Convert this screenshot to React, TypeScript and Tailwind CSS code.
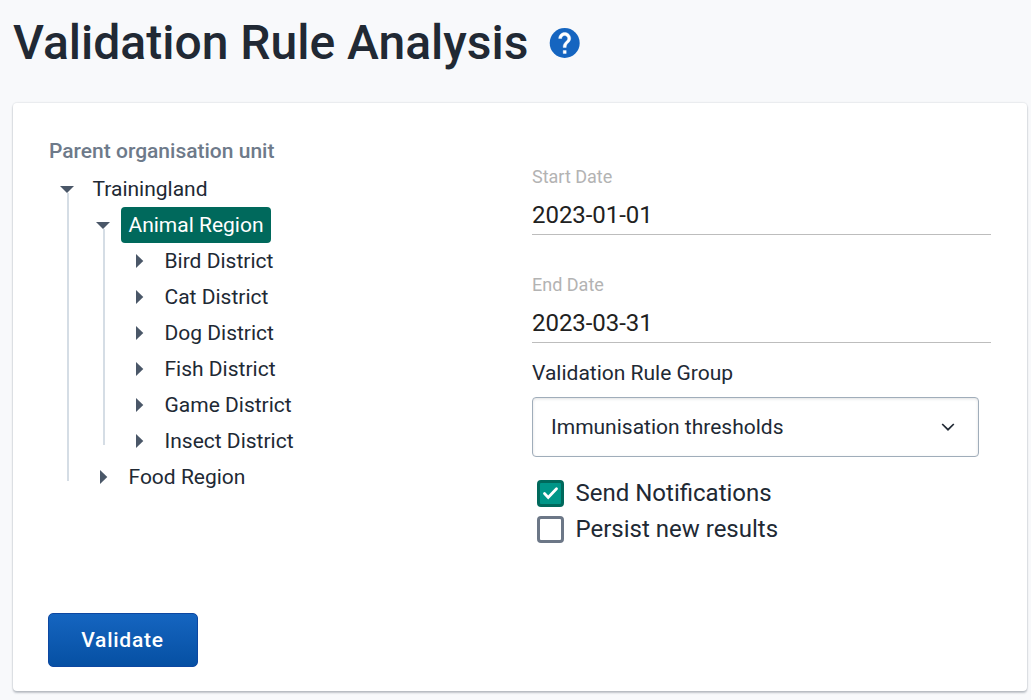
const districts = ["Bird District", "Cat District", "Dog District", "Fish District", "Game District", "Insect District"];

function HelpIcon() {
  return (
    <svg className="mt-[25px] ml-[19px] block size-9 shrink-0" viewBox="0.2 0 24 24">
      <circle cx="12" cy="12" r="10" fill="#1565c0" />
      <path
        d="M11 17h2v2h-2zM15.07 11.25l-.9.92C13.45 12.9 13 13.5 13 15h-2v-.5c0-1.1.45-2.1 1.17-2.83l1.24-1.26c.37-.36.59-.86.59-1.41 0-1.1-.9-2-2-2s-2 .9-2 2H8c0-2.21 1.79-4 4-4s4 1.79 4 4c0 .88-.36 1.68-.93 2.25z"
        fill="#fff"
        stroke="#fff"
        strokeWidth="0.25"
      />
    </svg>
  );
}

function DownArrow() {
  return (
    <svg className="block h-2 w-3.5 shrink-0" viewBox="0 0 14 8">
      <path d="M0 1H14L7 8Z" fill="#4a5768" />
    </svg>
  );
}

function RightArrow() {
  return (
    <svg className="block h-3.5 w-2 shrink-0" viewBox="0 0 8 14">
      <path d="M0 0L7.3 7L0 14Z" fill="#4a5768" />
    </svg>
  );
}

function ClosedNode({ label }: { label: string }) {
  return (
    <div className="flex h-9 items-center">
      <RightArrow />
      <span className="ml-[20.5px] pt-px">{label}</span>
    </div>
  );
}

function DateField({ label, value }: { label: string; value: string }) {
  return (
    <label className="flex h-[72px] w-[459px] flex-col border-b border-[#bdbdbd]">
      <span className="mt-0.5 text-[18px] leading-6 text-[#b3b3b3]">{label}</span>
      <span className="mt-3 text-[24px] leading-7 tracking-[-0.05px] text-[#212121]">{value}</span>
    </label>
  );
}

function CheckRow({ label, checked }: { label: string; checked: boolean }) {
  return (
    <label className="flex h-9 items-center text-[24px]">
      <span
        className={
          checked
            ? "flex size-[27px] items-center justify-center rounded-[4px] border-3 border-[#00695c] bg-[#009688]"
            : "flex size-[27px] rounded-[4px] border-3 border-[#6c7787] bg-white"
        }
      >
        {checked && (
          <svg className="size-[17px]" viewBox="0 0 17 17" fill="none">
            <path d="M2.5 8.6L6.2 12.4L14.5 3.8" stroke="#fff" strokeWidth="2.8" strokeLinecap="round" />
          </svg>
        )}
      </span>
      <span className="ml-[11.5px]">{label}</span>
    </label>
  );
}

export default function App() {
  return (
    <div className="h-[700px] w-[1031px] overflow-hidden bg-[#f8f9fb] pl-[13px] font-['Roboto',sans-serif] text-[#212934]">
      <header className="flex h-[103px] items-start">
        <h1 className="mt-[15px] text-[48px] leading-[56px] font-medium whitespace-nowrap">Validation Rule Analysis</h1>
        <HelpIcon />
      </header>
      <main className="flex h-[588px] w-[1014px] flex-col rounded-[4px] bg-white px-[35px] shadow-[0_2px_2px_rgba(64,75,90,0.3),0_0_1px_1px_rgba(64,75,90,0.08)]">
        <div className="flex h-[510px]">
          <section className="w-[484px] pt-[33px] text-[21px]">
            <h2 className="ml-px leading-[30px] font-medium text-[#6e7a8a]">Parent organisation unit</h2>
            <ul className="mt-[5px] ml-3">
              <li>
                <div className="flex h-9 items-center">
                  <DownArrow />
                  <span className="ml-[18.5px] pt-px">Trainingland</span>
                </div>
                <div className="-mt-3.5 ml-[7px] h-[288px] border-l-2 border-[#d5dde5] pt-3.5">
                  <ul className="ml-[27px]">
                    <li>
                      <div className="flex h-9 items-center">
                        <DownArrow />
                        <span className="ml-[11px] flex h-9 w-[150px] items-center justify-center rounded-[4px] bg-[#00695c] pt-0.5 whitespace-nowrap text-white">
                          Animal Region
                        </span>
                      </div>
                      <div className="-mt-3.5 ml-[7px] h-[216px] border-l-2 border-[#d5dde5] pt-3.5">
                        <ul className="ml-[31px]">
                          {districts.map((name) => (
                            <li key={name}>
                              <ClosedNode label={name} />
                            </li>
                          ))}
                        </ul>
                      </div>
                    </li>
                    <li className="mt-3.5 ml-1">
                      <ClosedNode label="Food Region" />
                    </li>
                  </ul>
                </div>
              </li>
            </ul>
          </section>
          <section className="pt-[60px]">
            <div className="flex flex-col gap-9">
              <DateField label="Start Date" value="2023-01-01" />
              <DateField label="End Date" value="2023-03-31" />
            </div>
            <div className="mt-[15px] text-[21px] leading-[30px]">Validation Rule Group</div>
            <div className="mt-[9px] flex h-[60px] w-[447px] items-center justify-between rounded-[4px] border border-[#a0adba] bg-white pr-[22px] pl-[18px] text-[21px] shadow-[inset_0_1px_3px_rgba(48,54,60,0.15)]">
              <span className="pt-0.5">Immunisation thresholds</span>
              <svg className="h-2 w-4" viewBox="0 0 16 8" fill="none">
                <path d="M2.2 1L8 6.7L13.8 1" stroke="#212934" strokeWidth="1.7" />
              </svg>
            </div>
            <div className="mt-[18px] ml-[5px]">
              <CheckRow label="Send Notifications" checked />
              <CheckRow label="Persist new results" checked={false} />
            </div>
          </section>
        </div>
        <button
          type="button"
          className="h-[54px] w-[150px] rounded-[5px] border border-[#0d47a1] bg-linear-to-b from-[#1565c0] to-[#0650a3] pt-0.5 pr-px text-[21px] font-medium tracking-[0.75px] text-white"
        >
          Validate
        </button>
      </main>
    </div>
  );
}
